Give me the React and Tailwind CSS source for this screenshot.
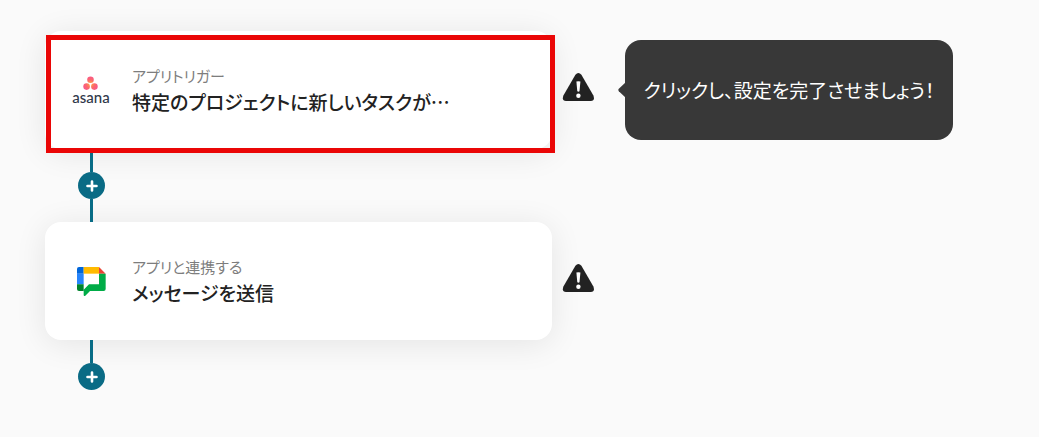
import React from "react";

export default function App() {
  return (
    <main className="min-h-screen bg-[#fafafa] px-[45px] pt-[31px] pb-12 font-['Noto_Sans_CJK_JP',sans-serif] [font-feature-settings:'palt']">
      <FlowStep
        logo={<AsanaLogo />}
        label="アプリトリガー"
        title="特定のプロジェクトに新しいタスクが…"
        tooltip="クリックし、設定を完了させましょう！"
        highlighted
      />
      <Connector />
      <FlowStep
        logo={<ChatLogo />}
        label="アプリと連携する"
        title="メッセージを送信"
      />
      <Connector last />
    </main>
  );
}

/* ---------- STEP CARD ---------- */

function FlowStep({ logo, label, title, tooltip, highlighted }) {
  return (
    <div className="flex items-center">
      <div className="relative w-full max-w-[507px]">
        <button
          type="button"
          className="flex w-full items-center gap-[21px] rounded-2xl bg-white px-[26px] py-[33px] text-left shadow-[0_4px_32px_rgba(0,0,0,0.09)]"
        >
          <span className="flex w-10 shrink-0 justify-center">{logo}</span>
          <span className="min-w-0">
            <span className="block text-[15px] leading-6 text-[#7d7d7d]">
              {label}
            </span>
            <span className="block truncate text-[19px] leading-7 font-medium text-[#222222]">
              {title}
            </span>
          </span>
        </button>
        {highlighted && (
          <div className="pointer-events-none absolute top-1 -right-[3px] -bottom-1 left-px z-20 border-5 border-[#ea0606]" />
        )}
      </div>

      <WarningIcon />

      {tooltip && (
        <div
          role="tooltip"
          className="relative ml-[31px] min-w-[328px] shrink-0 rounded-2xl bg-[#383838] px-4 py-9 text-center text-[19px] leading-7 text-white"
        >
          <svg
            viewBox="0 0 8 16"
            className="absolute top-1/2 -left-[7px] h-4 w-2 -translate-y-1/2 fill-[#383838]"
            aria-hidden="true"
          >
            <path d="M8 0 0.8 6.8Q-0.2 8 0.8 9.2L8 16Z" />
          </svg>
          {tooltip}
        </div>
      )}
    </div>
  );
}

/* ---------- CONNECTOR ---------- */

function Connector({ last }) {
  return (
    <div className="relative z-10 ml-[33px] flex w-[27px] flex-col items-center">
      <div className="h-[23px] w-[3px] bg-[#086c86]" />
      <button
        type="button"
        aria-label="ステップを追加"
        className="flex size-[27px] items-center justify-center rounded-full bg-[#0a6b85]"
      >
        <svg viewBox="0 0 12 12" className="size-3" aria-hidden="true">
          <path
            d="M6 1.5v9M1.5 6h9"
            stroke="#fff"
            strokeWidth="2.6"
            strokeLinecap="round"
          />
        </svg>
      </button>
      {!last && <div className="h-[23px] w-[3px] bg-[#086c86]" />}
    </div>
  );
}

/* ---------- ICONS ---------- */

function WarningIcon() {
  return (
    <svg
      viewBox="0 0 32 34"
      className="ml-[10px] h-[34px] w-8 shrink-0"
      aria-hidden="true"
    >
      <path
        d="M13.4 1.8Q16.4 -1.8 19.4 1.8L31.4 22.5Q33.2 27.8 28.8 28H4Q-0.4 27.8 1.4 22.5Z"
        fill="#222"
      />
      <path
        d="M14.4 8.6Q16.4 7.8 18.4 8.6L17.5 18.3Q16.4 19 15.3 18.3Z"
        fill="#fff"
      />
      <circle cx="16.4" cy="22.8" r="2.2" fill="#fff" />
    </svg>
  );
}

function AsanaLogo() {
  return (
    <span className="flex flex-col items-center">
      <svg viewBox="0 0 15 14" className="h-[14px] w-[15px]" aria-hidden="true">
        <defs>
          <radialGradient
            id="asana-dots"
            gradientUnits="userSpaceOnUse"
            cx="7.5"
            cy="8"
            r="8"
          >
            <stop offset="0" stopColor="#ffb03a" />
            <stop offset="0.5" stopColor="#fb6a6a" />
            <stop offset="1" stopColor="#f9558c" />
          </radialGradient>
        </defs>
        <g fill="url(#asana-dots)">
          <circle cx="7.5" cy="3.8" r="3.3" />
          <circle cx="3.6" cy="10.6" r="3.3" />
          <circle cx="11.4" cy="10.6" r="3.3" />
        </g>
      </svg>
      <span className="font-['Lato',sans-serif] text-[15px] leading-[14px] font-medium text-[#30384a]">
        asana
      </span>
    </span>
  );
}

function ChatLogo() {
  return (
    <svg viewBox="0 0 87 87" className="size-[29px]" aria-hidden="true">
      <path d="M6 0H20V20H0V6Q0 0 6 0Z" fill="#0066da" />
      <path d="M0 20H20V52H0Z" fill="#2684fc" />
      <path d="M20 0H66V20H20Z" fill="#ffba00" />
      <path d="M66 0 86 20H66Z" fill="#ea4335" />
      <path d="M0 52H20V72H6Q0 72 0 66Z" fill="#00832d" />
      <path
        d="M66 20H86V66Q86 72 80 72H39L25 86Q20 89 20 83V68L36 52H66Z"
        fill="#00ac47"
      />
    </svg>
  );
}
